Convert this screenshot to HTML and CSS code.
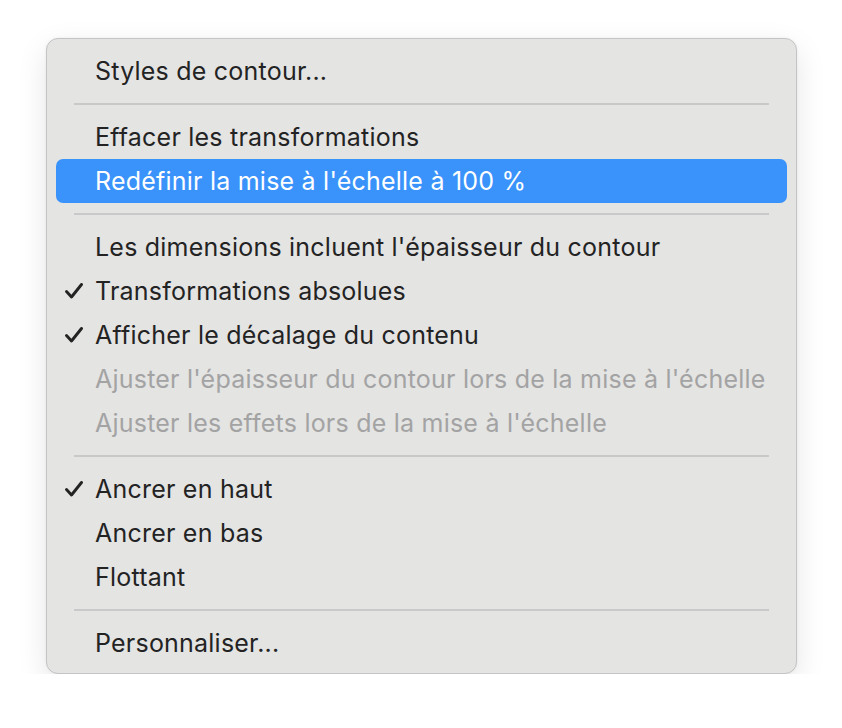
FILE: index.html
```html
<!DOCTYPE html>
<html lang="fr">
<head>
<meta charset="utf-8">
<link rel="stylesheet" href="styles.css">
</head>
<body>
<div class="menu">
  <div class="item">Styles de contour...</div>
  <div class="sep"></div>
  <div class="item">Effacer les transformations</div>
  <div class="item active">Redéfinir la mise à l'échelle à 100 %</div>
  <div class="sep"></div>
  <div class="item">Les dimensions incluent l'épaisseur du contour</div>
  <div class="item"><svg class="check" viewBox="0 0 18 16" width="18" height="16"><path d="M1.5 8.5 L6.5 14 L16.5 1.5" fill="none" stroke="#232323" stroke-width="2.9" stroke-linecap="round" stroke-linejoin="round"/></svg>Transformations absolues</div>
  <div class="item"><svg class="check" viewBox="0 0 18 16" width="18" height="16"><path d="M1.5 8.5 L6.5 14 L16.5 1.5" fill="none" stroke="#232323" stroke-width="2.9" stroke-linecap="round" stroke-linejoin="round"/></svg>Afficher le décalage du contenu</div>
  <div class="item disabled">Ajuster l'épaisseur du contour lors de la mise à l'échelle</div>
  <div class="item disabled">Ajuster les effets lors de la mise à l'échelle</div>
  <div class="sep"></div>
  <div class="item"><svg class="check" viewBox="0 0 18 16" width="18" height="16"><path d="M1.5 8.5 L6.5 14 L16.5 1.5" fill="none" stroke="#232323" stroke-width="2.9" stroke-linecap="round" stroke-linejoin="round"/></svg>Ancrer en haut</div>
  <div class="item">Ancrer en bas</div>
  <div class="item">Flottant</div>
  <div class="sep"></div>
  <div class="item">Personnaliser...</div>
</div>
</body>
</html>
```

FILE: styles.css
```css
html, body {
  margin: 0;
  padding: 0;
  background: #ffffff;
}
body {
  padding: 38px 0 0 46px;
  font-family: Inter, "Liberation Sans", sans-serif;
}
.menu {
  width: 751px;
  box-sizing: border-box;
  background: #e4e4e3;
  border: 1px solid #c4c4c4;
  border-radius: 12px;
  padding: 10px 9px 8px 9px;
  box-shadow: 0 10px 30px rgba(0,0,0,0.10), 0 0 3px rgba(0,0,0,0.06);
}
.item {
  position: relative;
  height: 44px;
  line-height: 44px;
  padding-left: 39px;
  font-size: 25px;
  letter-spacing: 0.22px;
  color: #232323;
  border-radius: 7px;
  white-space: nowrap;
}
.item.active {
  background: #3a92fb;
  color: #ffffff;
}
.item.disabled {
  color: #a3a3a3;
}
.check {
  position: absolute;
  left: 9px;
  top: 14px;
}
.sep {
  height: 2px;
  background: #c9c9c9;
  margin: 10px 18px;
}
```
